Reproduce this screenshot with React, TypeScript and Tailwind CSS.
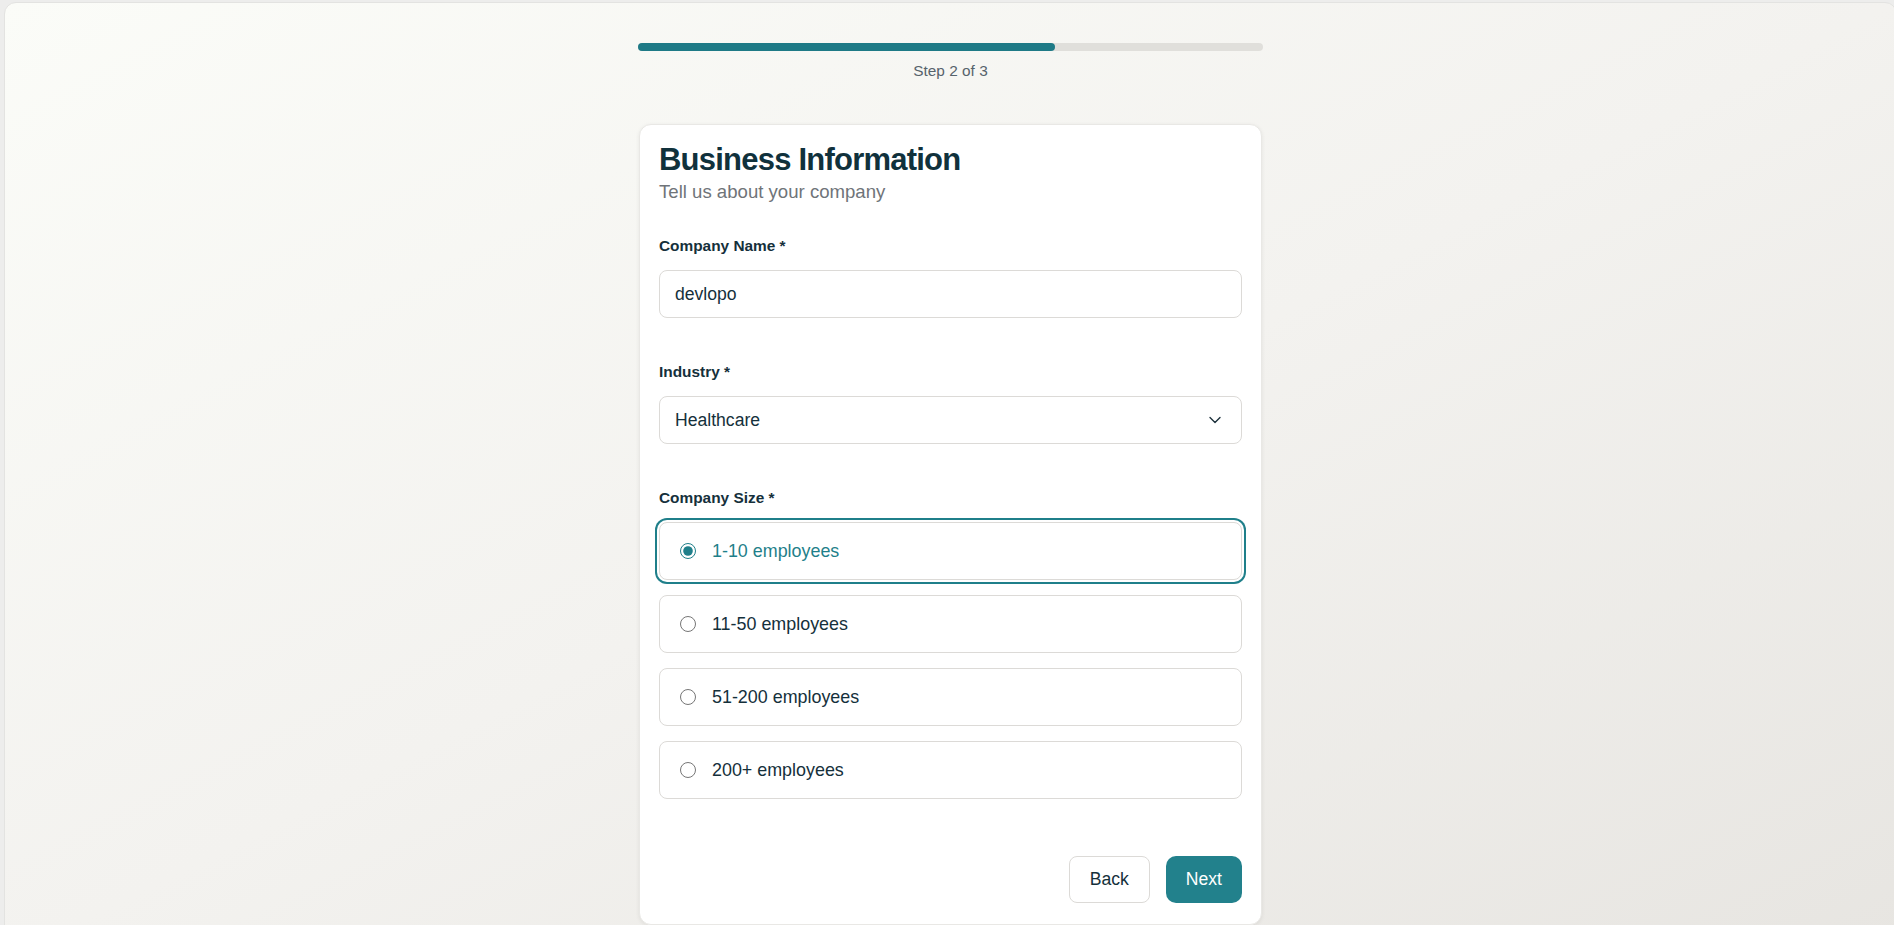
import React from "react";
import { ChevronDown } from "lucide-react";

const options = ["1-10 employees", "11-50 employees", "51-200 employees", "200+ employees"];

export default function App() {
  const [size, setSize] = React.useState(0);
  return (
    <div className="h-screen overflow-hidden bg-[#ededec] pl-[4px] pt-[2px] font-['Liberation_Sans',Arial,sans-serif]">
      <div className="w-[1893px] min-h-[960px] rounded-xl border border-[#e3e3e1] bg-linear-to-br from-[#fbfcf8] via-[#f3f2ef] to-[#e7e5e1]">
        <div className="mx-auto w-[625px] pt-[40px]">
          <div className="h-2 w-full rounded-full bg-[#e0dfdb]">
            <div className="h-2 w-2/3 rounded-full bg-[#1e7a86]" />
          </div>
          <p className="mt-[9px] text-center text-[15.4px] leading-[22px] text-[#56636c]">Step 2 of 3</p>

          <div className="mx-px mt-[42px] rounded-xl border border-[#e9e8e5] bg-white px-[19px] pt-[17px] pb-[21px] shadow-[0_1px_4px_rgba(0,0,0,0.07)]">
            <h1 className="text-[31px] leading-[36px] font-bold tracking-tight text-[#10313c]">Business Information</h1>
            <p className="mt-px text-[18.6px] leading-[26px] text-[#6f7479]">Tell us about your company</p>

            <div className="mt-[30px]">
              <label className="block text-[15.4px] leading-[22px] font-semibold text-[#15303b]">Company Name *</label>
              <input
                defaultValue="devlopo"
                className="mt-[13px] h-[48px] w-full rounded-lg border border-[#dcdad7] bg-white px-[15px] text-[17.6px] text-[#15303b] outline-none"
              />
            </div>

            <div className="mt-[43px]">
              <label className="block text-[15.4px] leading-[22px] font-semibold text-[#15303b]">Industry *</label>
              <div className="mt-[13px] flex h-[48px] w-full items-center justify-between rounded-lg border border-[#dcdad7] bg-white pl-[15px] pr-[16px] text-[17.6px] text-[#15303b]">
                <span>Healthcare</span>
                <ChevronDown size={20} strokeWidth={1.6} className="text-[#1b2f3a]" />
              </div>
            </div>

            <div className="mt-[43px]">
              <label className="block text-[15.4px] leading-[22px] font-semibold text-[#15303b]">Company Size *</label>
              <div className="mt-[13px] flex flex-col gap-[15px]">
                {options.map((o, i) => {
                  const sel = i === size;
                  return (
                    <label
                      key={o}
                      className={
                        sel
                          ? "flex h-[58px] items-center gap-4 rounded-lg border border-[#dcdad7] bg-white px-5 ring-2 ring-[#1f7f8a] ring-offset-2"
                          : "flex h-[58px] items-center gap-4 rounded-lg border border-[#dcdad7] bg-white px-5"
                      }
                    >
                      <input
                        type="radio"
                        name="size"
                        checked={sel}
                        onChange={() => setSize(i)}
                        className="h-4 w-4 accent-[#1f7f8a]"
                      />
                      <span className={sel ? "text-[17.9px] text-[#1f7f8a]" : "text-[17.9px] text-[#15303b]"}>{o}</span>
                    </label>
                  );
                })}
              </div>
            </div>

            <div className="mt-[57px] flex justify-end gap-4">
              <button className="h-[47px] rounded-lg border border-[#dcdad7] bg-white px-5 text-[17.6px] text-[#15303b]">Back</button>
              <button className="h-[47px] rounded-[10px] bg-[#22818c] px-5 text-[17.6px] text-white">Next</button>
            </div>
          </div>
        </div>
      </div>
    </div>
  );
}
